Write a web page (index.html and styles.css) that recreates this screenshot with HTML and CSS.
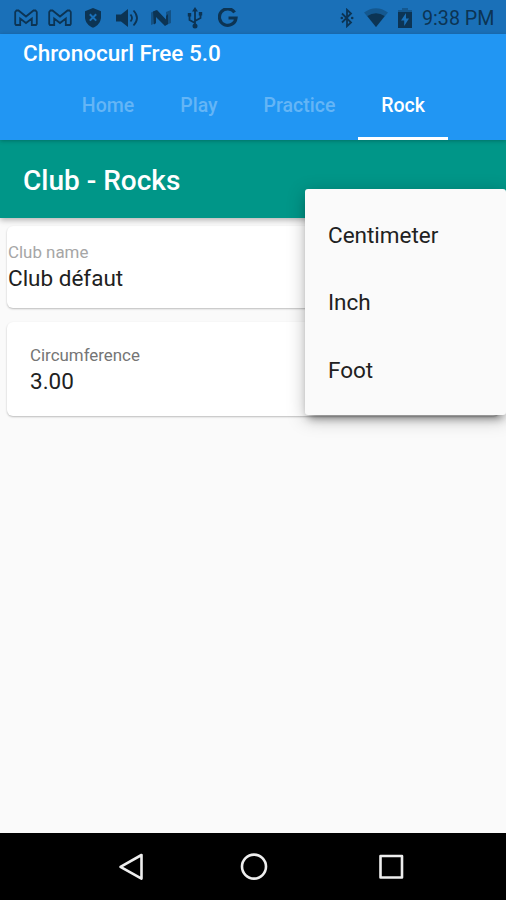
FILE: index.html
```html
<!DOCTYPE html>
<html lang="en">
<head>
  <meta charset="UTF-8" />
  <meta name="viewport" content="width=device-width, initial-scale=1.0"/>
  <title>Chronocurl Free 5.0</title>
  <link rel="stylesheet" href="styles.css">
</head>
<body>

  <div class="status-bar">
    <div class="status-left">
      <svg width="24" height="18" viewBox="0 0 24 18"><path class="line" d="M2.500 1.500H4.500L12 7.500l7.500-6h2L22.800 3V15L22 16H17.800V9.500L12 14 6.200 9.500V16H2L1.200 15V3Z"/></svg>
      <svg width="24" height="18" viewBox="0 0 24 18"><path class="line" d="M2.500 1.500H4.500L12 7.500l7.500-6h2L22.800 3V15L22 16H17.800V9.500L12 14 6.200 9.500V16H2L1.200 15V3Z"/></svg>
      <svg class="shield" width="18" height="20" viewBox="0 0 18 20"><path d="M9 0l8 3.200V9c0 5-3.400 9-8 10.800C4.400 18 1 14 1 9V3.200Z"/><path class="cross" d="M5.800 6.200l6.400 6.400M12.200 6.200l-6.400 6.400"/></svg>
      <svg class="volume" width="23" height="20" viewBox="0 0 23 20"><path d="M0 6.500h5L12 1v18l-7-5.500H0Z"/><path class="line" d="M14.500 6.500q3 3.500 0 7M17.500 2.500q7 7.500 0 15"/></svg>
      <svg class="n-icon" width="22" height="18" viewBox="0 0 22 18"><path opacity=".5" d="M1 3.500l5-2V14l-5 2ZM16 3l5-2v13l-5 2Z"/><path d="M3 2.500L7 1l9 9.500V7l2-2v10l-3 2L6 8v6l-2 1.500Z"/></svg>
      <svg class="usb" width="16" height="22" viewBox="0 0 16 22"><path class="line" d="M8 3v15M8 16L2.500 13V8M8 14l5.500-3V7"/><path d="M8 0l3 4.500H5ZM.8 6h3.400v3.400H.8ZM11.800 5h3.400v3.400h-3.400Z"/><circle cx="8" cy="19" r="2.500"/></svg>
      <svg class="g-icon" width="20" height="20" viewBox="0 0 20 20"><path d="M16.600 4.400A8.300 8.300 0 1 0 18 10H10.500"/></svg>
    </div>
    <div class="status-right">
      <svg class="bluetooth" width="14" height="20" viewBox="0 0 14 20"><path class="line" d="M2 5.500l9 9L7 18.200V1.800l4 3.700-9 9"/><circle cx="1.800" cy="10" r="1.300"/><circle cx="12.200" cy="10" r="1.300"/></svg>
      <svg class="wifi" width="24" height="19" viewBox="0 0 24 19"><path opacity=".4" d="M0 4.500Q12-4 24 4.500L12 19Z"/><path d="M3.300 8Q12 2.500 20.700 8L12 19Z"/></svg>
      <svg class="battery" width="14" height="20" viewBox="0 0 14 20"><path opacity=".4" d="M4 0h6v2h4v3H0V2h4Z"/><path fill-rule="evenodd" d="M0 4h14v16H0ZM8 5L3 12.500h3.200V18L11 10.500H8Z"/></svg>
      <span class="clock">9:38 PM</span>
    </div>
  </div>

  <header>
    <h1>Chronocurl Free 5.0</h1>
    <nav class="tabs">
      <a class="tab home">Home</a>
      <a class="tab play">Play</a>
      <a class="tab practice">Practice</a>
      <a class="tab rock active">Rock</a>
    </nav>
  </header>

  <div class="club-bar">
    <h2>Club - Rocks</h2>
    <div class="unit-menu">
      <div class="unit">Centimeter</div>
      <div class="unit">Inch</div>
      <div class="unit">Foot</div>
    </div>
  </div>

  <main>
    <div class="card club-name">
      <label>Club name</label>
      <p>Club défaut</p>
    </div>
    <div class="card circumference">
      <label>Circumference</label>
      <p>3.00</p>
    </div>
  </main>

  <footer class="nav-bar">
    <svg width="28" height="30" viewBox="0 0 28 30"><path d="M24.500 3v23.600L3.500 14.800Z"/></svg>
    <svg width="28" height="30" viewBox="0 0 28 30"><circle cx="14" cy="14.600" r="12"/></svg>
    <svg width="28" height="30" viewBox="0 0 28 30"><rect x="3.500" y="4" width="21.500" height="21.500"/></svg>
  </footer>

</body>
</html>
```

FILE: styles.css
```css
* {
  box-sizing: border-box;
  margin: 0;
  padding: 0;
}

body {
  font-family: Roboto, sans-serif;
  background: #fafafa;
  color: #212121;
  height: 900px;
  display: flex;
  flex-direction: column;
  overflow: hidden;
}

.status-bar {
  height: 34px;
  background: #1a70b8;
  color: #0c3454;
  display: flex;
  justify-content: space-between;
  align-items: center;
  padding: 1px 10px 0 14px;
}

.status-bar svg {
  fill: currentColor;
  flex: none;
}

.status-bar .line {
  fill: none;
  stroke: currentColor;
  stroke-width: 1.8;
}

.status-left,
.status-right {
  display: flex;
  align-items: center;
}

.status-left {
  gap: 10px;
}

.shield {
  margin-left: 2px;
}

.shield .cross {
  fill: none;
  stroke: #1a70b8;
  stroke-width: 2;
}

.volume {
  margin-left: 4px;
}

.n-icon {
  margin-left: 1px;
}

.usb {
  margin-left: 5px;
}

.g-icon {
  margin-left: 5px;
}

.status-bar .g-icon {
  fill: none;
  stroke: currentColor;
  stroke-width: 3.2;
}

.wifi {
  margin-left: 10px;
}

.battery {
  margin: 0 10px 0 10px;
}

.clock {
  font-size: 19.700px;
  line-height: 35px;
  width: 74px;
  padding-top: 1px;
  white-space: nowrap;
}

header {
  height: 106px;
  background: #2196f3;
  color: white;
  display: flex;
  flex-direction: column;
  z-index: 1;
  box-shadow: 0 1px 4px rgba(0,0,0,0.25);
}

header h1 {
  font-size: 22.500px;
  font-weight: 500;
  line-height: 39px;
  height: 38px;
  padding-left: 23px;
}

.tabs {
  flex: 1;
  display: flex;
  padding-left: 59px;
}

.tab {
  display: flex;
  justify-content: center;
  font-size: 19.500px;
  font-weight: 500;
  line-height: 67px;
  height: 68px;
  color: #64b5f6;
  border-bottom: 3px solid transparent;
}

.home {
  width: 98px;
}

.play {
  width: 84px;
}

.practice {
  width: 117px;
}

.rock {
  width: 90px;
}

.tab.active {
  color: white;
  border-bottom-color: white;
}

.club-bar {
  position: relative;
  height: 78px;
  background: #009688;
  color: white;
  box-shadow: 0 2px 6px rgba(0,0,0,0.3);
}

.club-bar h2 {
  font-size: 28px;
  font-weight: 500;
  line-height: 81px;
  padding-left: 23px;
}

/* unit dropdown opened over the cards */
.unit-menu {
  position: absolute;
  top: 49px;
  right: 0;
  width: 201px;
  height: 226px;
  padding: 13px 23px 11px;
  background: #fafafa;
  color: #212121;
  border-radius: 3px;
  box-shadow: 0 7px 8px -4px rgba(0,0,0,0.4), 0 4px 18px rgba(0,0,0,0.26);
}

.unit {
  height: 67.400px;
  line-height: 67px;
  font-size: 22.500px;
}

main {
  flex: 1;
  padding: 8px 7px;
  display: flex;
  flex-direction: column;
  gap: 14px;
}

.card {
  background: white;
  border-radius: 6px;
  box-shadow: 0 1px 2px rgba(0,0,0,0.25);
}

.card label {
  display: block;
  font-size: 16.900px;
  line-height: 22px;
  color: #757575;
}

.card p {
  font-size: 22.500px;
  line-height: 30px;
}

.club-name {
  height: 82px;
  padding: 15px 1px;
}

.club-name label {
  color: #a6a6a6;
}

.circumference {
  height: 94px;
  padding: 22px 23px;
}

.nav-bar {
  height: 67px;
  background: black;
  display: flex;
  align-items: center;
  gap: 109px;
  padding-left: 117px;
}

.nav-bar svg {
  fill: none;
  stroke: #eee;
  stroke-width: 2.600;
  stroke-linejoin: round;
}

.nav-bar svg:first-child {
  margin-right: -14px;
}
```
